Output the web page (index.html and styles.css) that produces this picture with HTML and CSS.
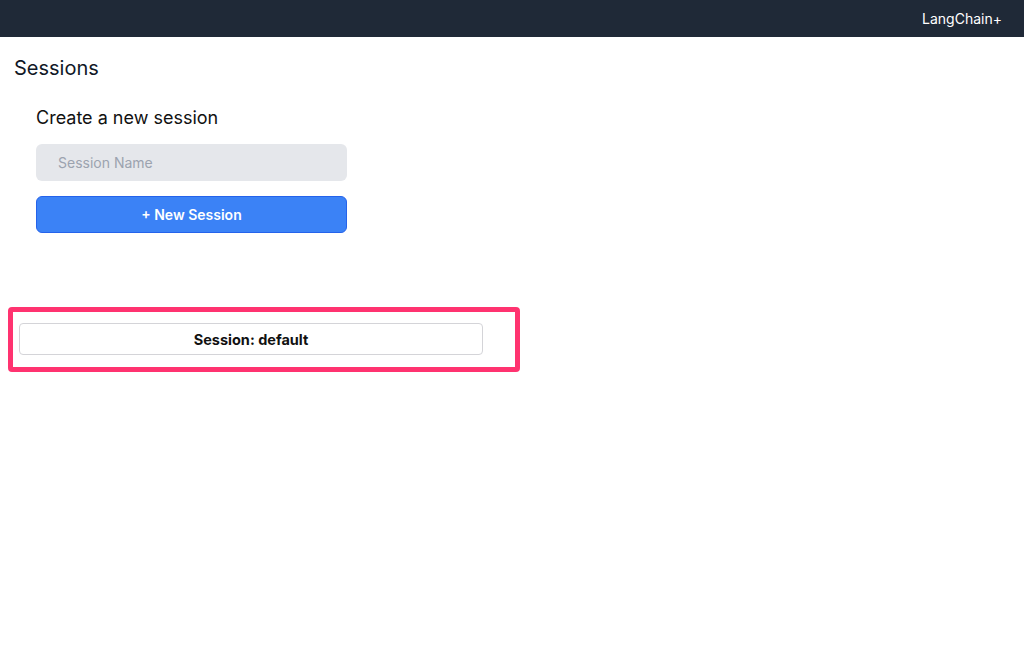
FILE: index.html
```html
<!DOCTYPE html>
<html>
<head>
<meta charset="utf-8">
<link rel="stylesheet" href="styles.css">
</head>
<body>
<header class="navbar">
  <span class="brand">LangChain+</span>
</header>
<main class="page">
  <h1 class="page-title">Sessions</h1>
  <section class="create">
    <h2 class="create-title">Create a new session</h2>
    <input class="name-input" type="text" placeholder="Session Name">
    <button class="new-btn">+ New Session</button>
  </section>
  <div class="highlight">
    <div class="session-card">Session: default</div>
  </div>
</main>
</body>
</html>
```

FILE: styles.css
```css
* { box-sizing: border-box; }
html, body { margin: 0; padding: 0; background: #fff; }
body {
  font-family: "Inter", "Liberation Sans", Arial, sans-serif;
  color: #111827;
}
.navbar {
  height: 37px;
  background: #1f2937;
  display: flex;
  align-items: center;
  justify-content: flex-end;
  padding-right: 22px;
}
.brand {
  color: #fff;
  font-size: 14px;
}
.page {
  padding-top: 17px;
}
.page-title {
  margin: 0 0 0 14px;
  font-size: 20px;
  font-weight: 400;
  line-height: 28px;
  color: #111827;
}
.create {
  margin-left: 36px;
  width: 311px;
  display: flex;
  flex-direction: column;
}
.create-title {
  margin: 24px 0 0 0;
  font-size: 18px;
  font-weight: 400;
  line-height: 24px;
  color: #111;
}
.name-input {
  margin-top: 14px;
  height: 37px;
  border: none;
  border-radius: 6px;
  background: #e5e7eb;
  padding: 0 22px;
  font-family: inherit;
  font-size: 14px;
  color: #111827;
  outline: none;
}
.name-input::placeholder { color: #9ca3af; }
.new-btn {
  margin-top: 15px;
  height: 37px;
  border: 1px solid #2563eb;
  border-radius: 6px;
  background: #3b82f6;
  color: #fff;
  font-family: inherit;
  font-size: 14px;
  font-weight: 600;
}
.highlight {
  margin: 74px 0 0 8px;
  width: 512px;
  height: 65px;
  border: 5px solid #ff3370;
  border-radius: 4px;
  padding: 11px 0 0 6px;
}
.session-card {
  width: 464px;
  height: 32px;
  border: 1px solid #d4d4d8;
  border-radius: 4px;
  display: flex;
  align-items: center;
  justify-content: center;
  font-size: 14.5px;
  font-weight: 700;
  color: #111;
}
```
